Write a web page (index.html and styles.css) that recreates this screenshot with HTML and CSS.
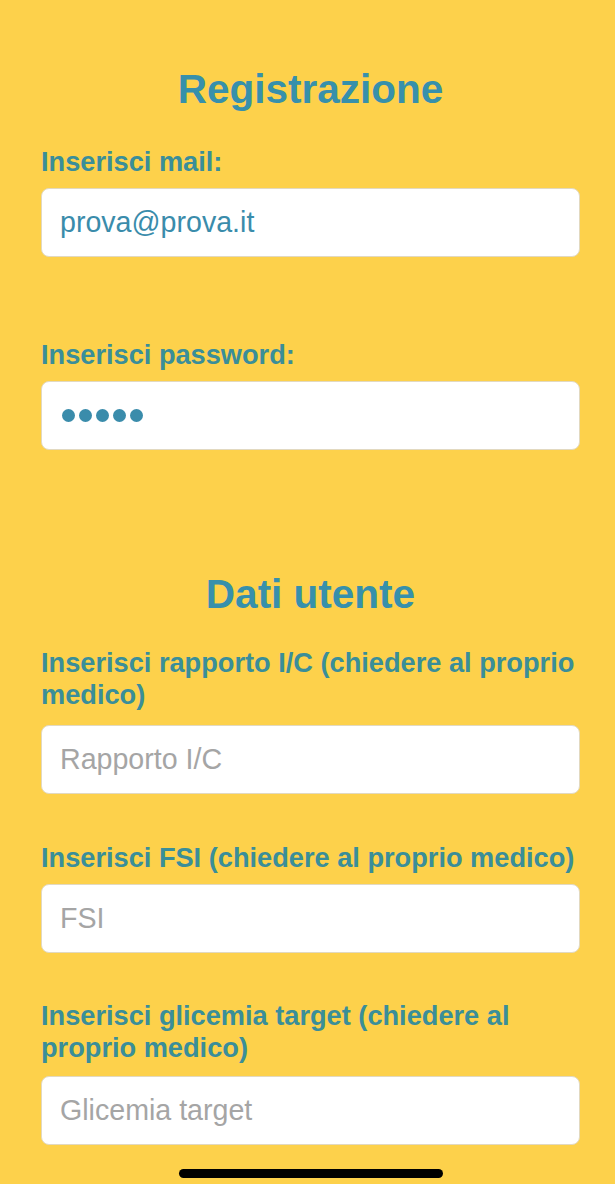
FILE: index.html
```html
<!DOCTYPE html>
<html lang="it">
<head>
<meta charset="utf-8">
<title>Registrazione</title>
<link rel="stylesheet" href="styles.css">
</head>
<body>
<main class="form">
  <h1 class="title title-reg">Registrazione</h1>

  <label class="label label-first" for="mail">Inserisci mail:</label>
  <input class="field" id="mail" type="text" value="prova@prova.it">

  <label class="label label-pass">Inserisci password:</label>
  <div class="field field-pass" aria-label="password">
    <span class="dot"></span><span class="dot"></span><span class="dot"></span><span class="dot"></span><span class="dot"></span>
  </div>

  <h2 class="title title-dati">Dati utente</h2>

  <label class="label label-ic" for="ic">Inserisci rapporto I/C (chiedere al proprio medico)</label>
  <input class="field field-ic" id="ic" type="text" placeholder="Rapporto I/C">

  <label class="label label-fsi" for="fsi">Inserisci FSI (chiedere al proprio medico)</label>
  <input class="field" id="fsi" type="text" placeholder="FSI">

  <label class="label label-gli" for="gli">Inserisci glicemia target (chiedere al proprio medico)</label>
  <input class="field field-gli" id="gli" type="text" placeholder="Glicemia target">
</main>
<div class="home-indicator"></div>
</body>
</html>
```
FILE: styles.css
```css
html, body {
  margin: 0;
  padding: 0;
}

body {
  background: #fdd14b;
  font-family: "Liberation Sans", Arial, sans-serif;
  min-height: 1184px;
  position: relative;
  overflow: hidden;
}

.form {
  display: flex;
  flex-direction: column;
  padding: 65px 35px 0 41px;
}

.title {
  margin: 0;
  text-align: center;
  font-size: 40.5px;
  line-height: 48px;
  font-weight: bold;
  color: #3790ab;
}

.title-dati {
  margin-top: 120px;
}

.label {
  display: block;
  font-size: 27.2px;
  line-height: 32px;
  font-weight: bold;
  color: #3a8e99;
  margin: 0 0 10px;
}

.label-first {
  margin-top: 33px;
}

.label-pass {
  margin-top: 82px;
}

.label-ic {
  margin-top: 29px;
  margin-bottom: 14px;
}

.label-fsi {
  margin-top: 48px;
}

.label-gli {
  margin-top: 47px;
  margin-bottom: 12px;
}

.field {
  box-sizing: border-box;
  width: 100%;
  height: 69px;
  margin: 0;
  padding: 0 18px;
  border: 1px solid #e2d9c0;
  border-radius: 8px;
  background: #ffffff;
  font-family: "Liberation Sans", Arial, sans-serif;
  font-size: 28.6px;
  color: #3a8cab;
  outline: none;
}

.field::placeholder {
  color: #a5a5a5;
  opacity: 1;
}

.field-pass {
  display: flex;
  align-items: center;
  gap: 4px;
  padding-left: 20px;
}

.dot {
  width: 13px;
  height: 13px;
  border-radius: 50%;
  background: #3a8cab;
}

.home-indicator {
  position: absolute;
  left: 179px;
  top: 1169px;
  width: 264px;
  height: 9px;
  border-radius: 5px;
  background: #000000;
}
```
